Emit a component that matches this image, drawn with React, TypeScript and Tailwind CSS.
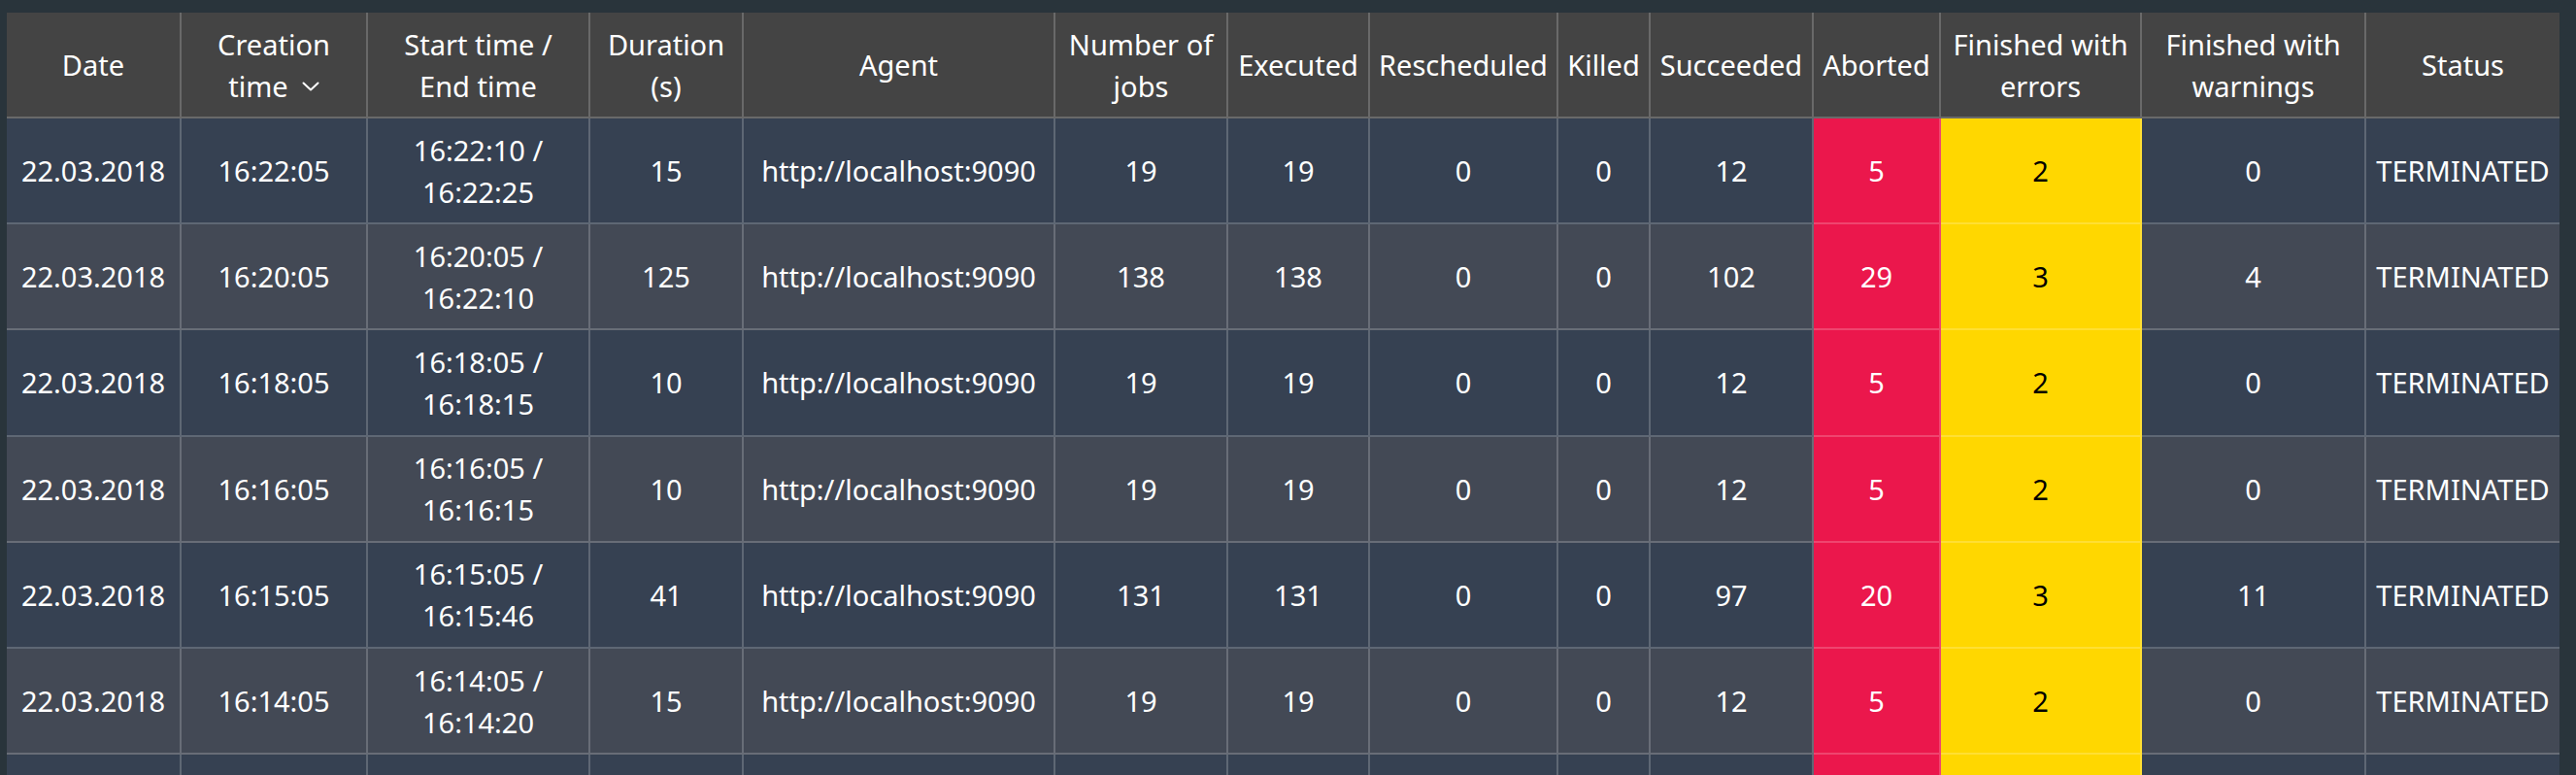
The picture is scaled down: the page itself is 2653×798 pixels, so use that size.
import React from "react";

const widths = [180, 192, 229, 158, 321, 178, 146, 194, 95, 168, 131, 207, 231, 199];

type Row = {
  date: string;
  created: string;
  start: string;
  end: string;
  dur: string;
  jobs: string;
  exec: string;
  resch: string;
  killed: string;
  succ: string;
  abort: string;
  errs: string;
  warns: string;
};

const rows: Row[] = [
  { date: "22.03.2018", created: "16:22:05", start: "16:22:10", end: "16:22:25", dur: "15", jobs: "19", exec: "19", resch: "0", killed: "0", succ: "12", abort: "5", errs: "2", warns: "0" },
  { date: "22.03.2018", created: "16:20:05", start: "16:20:05", end: "16:22:10", dur: "125", jobs: "138", exec: "138", resch: "0", killed: "0", succ: "102", abort: "29", errs: "3", warns: "4" },
  { date: "22.03.2018", created: "16:18:05", start: "16:18:05", end: "16:18:15", dur: "10", jobs: "19", exec: "19", resch: "0", killed: "0", succ: "12", abort: "5", errs: "2", warns: "0" },
  { date: "22.03.2018", created: "16:16:05", start: "16:16:05", end: "16:16:15", dur: "10", jobs: "19", exec: "19", resch: "0", killed: "0", succ: "12", abort: "5", errs: "2", warns: "0" },
  { date: "22.03.2018", created: "16:15:05", start: "16:15:05", end: "16:15:46", dur: "41", jobs: "131", exec: "131", resch: "0", killed: "0", succ: "97", abort: "20", errs: "3", warns: "11" },
  { date: "22.03.2018", created: "16:14:05", start: "16:14:05", end: "16:14:20", dur: "15", jobs: "19", exec: "19", resch: "0", killed: "0", succ: "12", abort: "5", errs: "2", warns: "0" },
  { date: "22.03.2018", created: "16:12:05", start: "16:12:05", end: "16:12:20", dur: "15", jobs: "19", exec: "19", resch: "0", killed: "0", succ: "12", abort: "5", errs: "2", warns: "0" },
];

function Chevron() {
  return (
    <svg width="18" height="10" viewBox="0 0 18 10" className="inline-block ml-[14px] align-[6px]" fill="none">
      <polyline points="1.5,1.5 9,8.5 16.5,1.5" stroke="white" strokeWidth="2" strokeLinecap="round" strokeLinejoin="round" />
    </svg>
  );
}

function Cell({
  i,
  children,
  bg,
  dark,
}: {
  i: number;
  children: React.ReactNode;
  bg?: string;
  dark?: boolean;
}) {
  const last = i === widths.length - 1;
  return (
    <div
      style={{ width: widths[i] }}
      className={
        "shrink-0 flex flex-col items-center justify-center text-center border-b-2 border-white/20 " +
        (last ? "" : "border-r-2 ") +
        (bg ?? "") +
        (dark ? " text-black" : " text-white")
      }
    >
      {children}
    </div>
  );
}

function Line({ children }: { children: React.ReactNode }) {
  return <span className="whitespace-nowrap">{children}</span>;
}

export default function App() {
  const headers: React.ReactNode[] = [
    <Line>Date</Line>,
    <>
      <Line>Creation</Line>
      <Line>
        time
        <Chevron />
      </Line>
    </>,
    <>
      <Line>Start time /</Line>
      <Line>End time</Line>
    </>,
    <>
      <Line>Duration</Line>
      <Line>(s)</Line>
    </>,
    <Line>Agent</Line>,
    <>
      <Line>Number of</Line>
      <Line>jobs</Line>
    </>,
    <Line>Executed</Line>,
    <Line>Rescheduled</Line>,
    <Line>Killed</Line>,
    <Line>Succeeded</Line>,
    <Line>Aborted</Line>,
    <>
      <Line>Finished with</Line>
      <Line>errors</Line>
    </>,
    <>
      <Line>Finished with</Line>
      <Line>warnings</Line>
    </>,
    <Line>Status</Line>,
  ];

  return (
    <div
      className="h-screen w-full overflow-hidden bg-[#29343b] pt-[13px] pl-[7px] text-[29px] leading-[43px] text-white"
      style={{ fontFamily: '"Noto Sans", "Open Sans", sans-serif' }}
    >
      <div className="flex flex-col w-[2629px]">
        <div className="flex h-[109px] bg-[#444444]">
          {headers.map((h, i) => (
            <Cell key={i} i={i}>
              {h}
            </Cell>
          ))}
        </div>
        {rows.map((r, ri) => {
          const rowBg = ri % 2 === 0 ? "bg-[#364152]" : "bg-[#434955]";
          return (
            <div key={ri} className={"flex h-[109.2px] " + rowBg}>
              <Cell i={0}><Line>{r.date}</Line></Cell>
              <Cell i={1}><Line>{r.created}</Line></Cell>
              <Cell i={2}>
                <Line>{r.start} /</Line>
                <Line>{r.end}</Line>
              </Cell>
              <Cell i={3}><Line>{r.dur}</Line></Cell>
              <Cell i={4}><Line>http://localhost:9090</Line></Cell>
              <Cell i={5}><Line>{r.jobs}</Line></Cell>
              <Cell i={6}><Line>{r.exec}</Line></Cell>
              <Cell i={7}><Line>{r.resch}</Line></Cell>
              <Cell i={8}><Line>{r.killed}</Line></Cell>
              <Cell i={9}><Line>{r.succ}</Line></Cell>
              <Cell i={10} bg="bg-[#eb174c]"><Line>{r.abort}</Line></Cell>
              <Cell i={11} bg="bg-[#ffd700]" dark><Line>{r.errs}</Line></Cell>
              <Cell i={12}><Line>{r.warns}</Line></Cell>
              <Cell i={13}><Line>TERMINATED</Line></Cell>
            </div>
          );
        })}
      </div>
    </div>
  );
}
